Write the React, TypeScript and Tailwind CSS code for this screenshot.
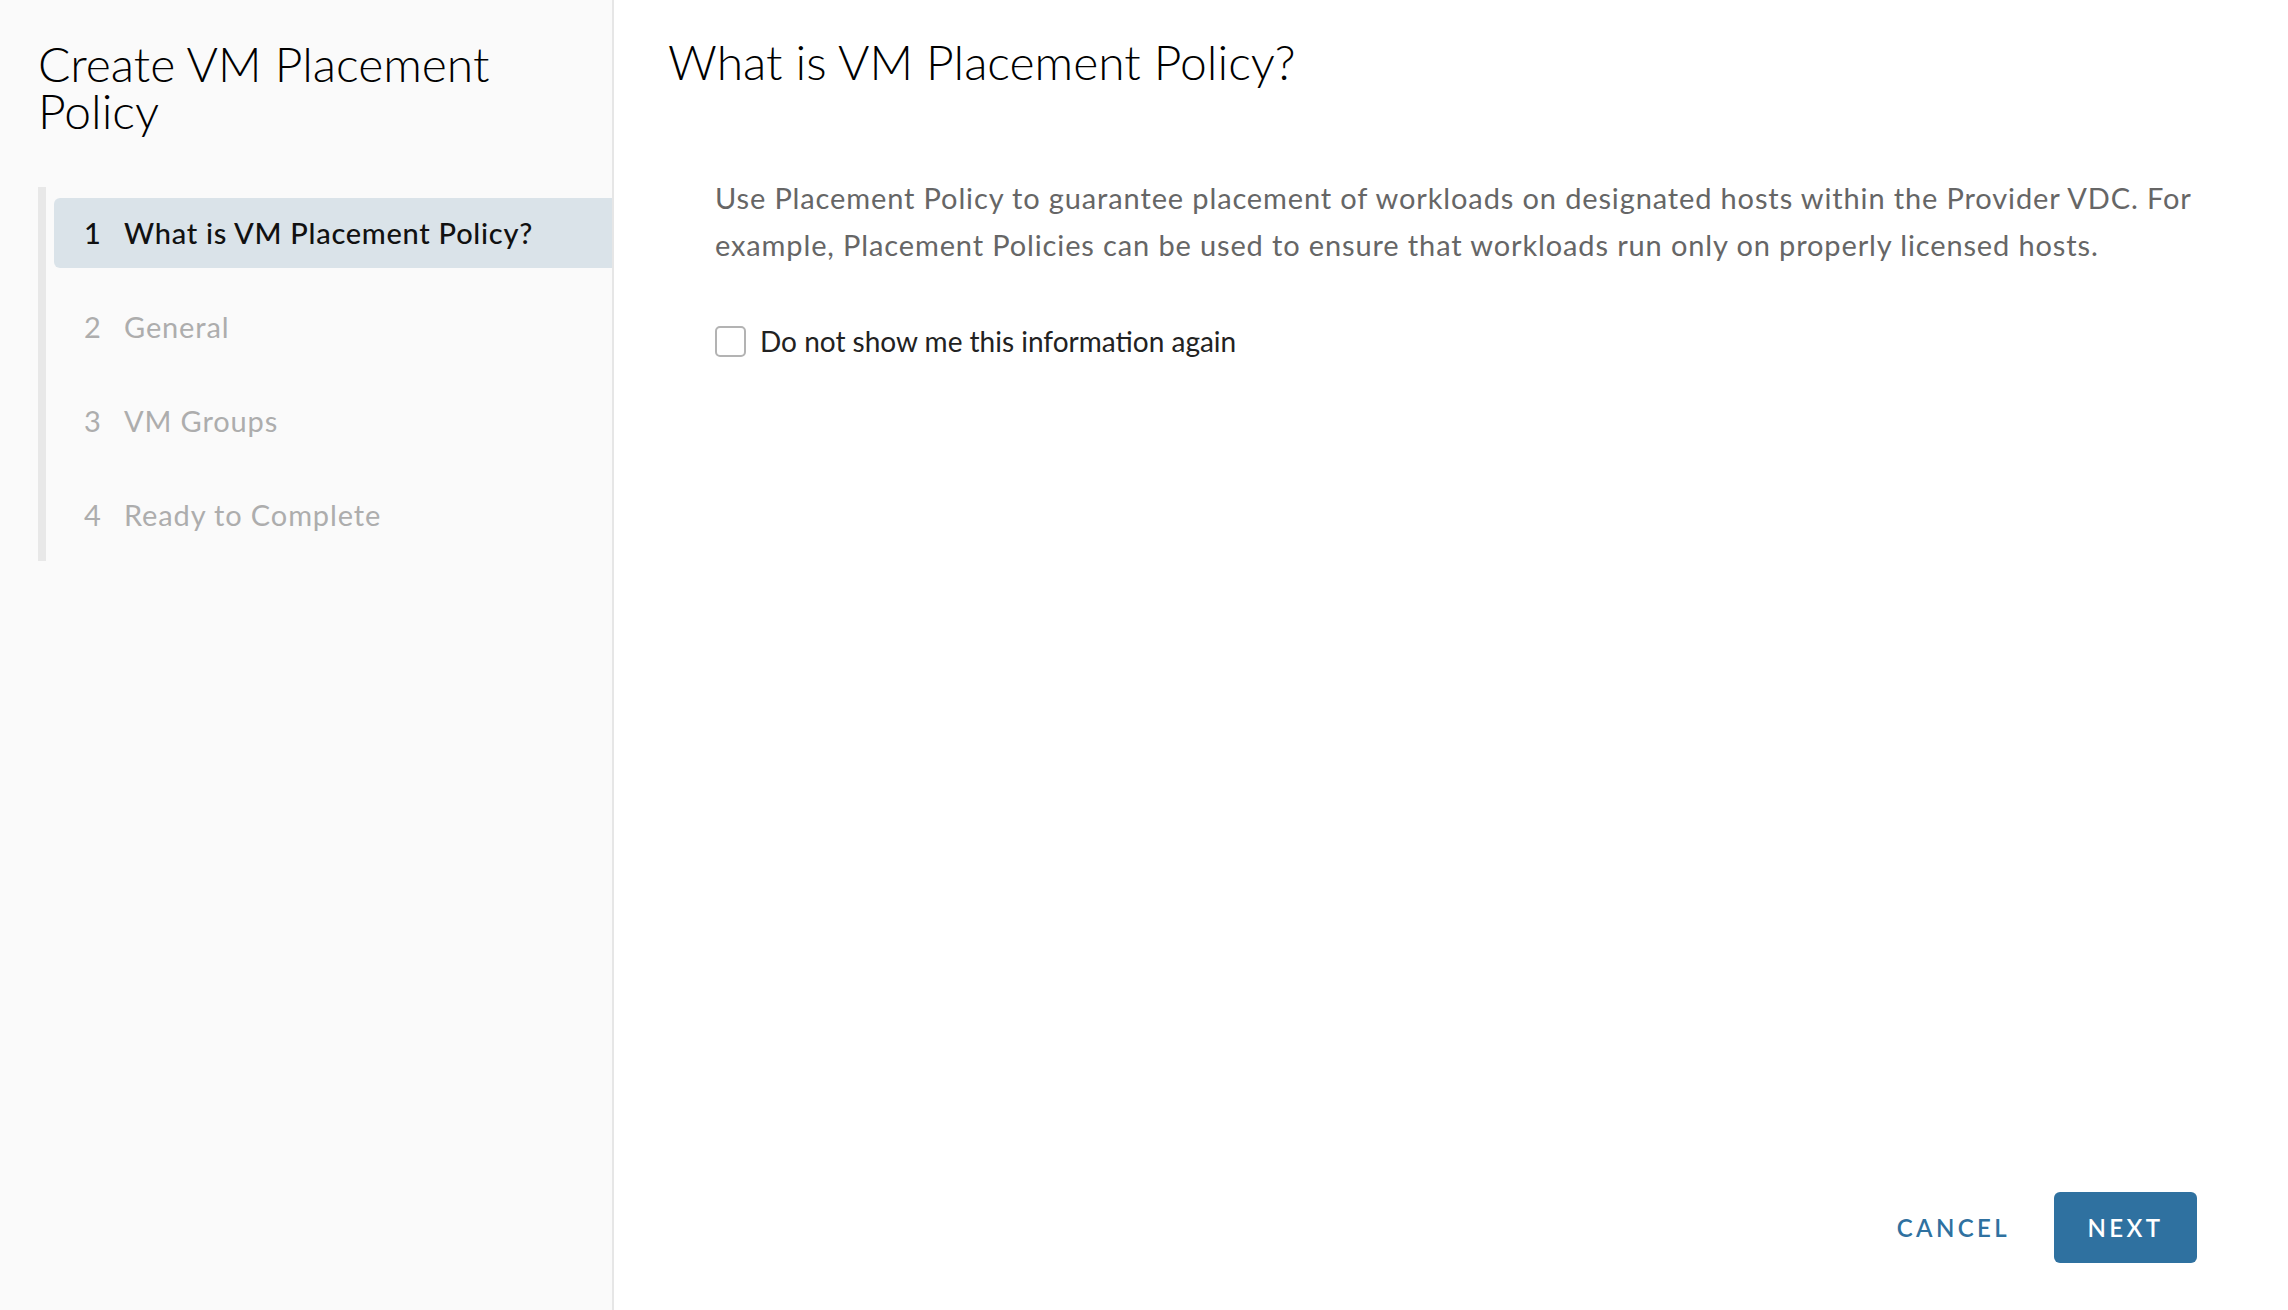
import React from "react";

const steps = [
  { n: 1, label: "What is VM Placement Policy?", active: true },
  { n: 2, label: "General", active: false },
  { n: 3, label: "VM Groups", active: false },
  { n: 4, label: "Ready to Complete", active: false },
];

export default function App() {
  return (
    <div
      className="flex h-[1310px] w-full bg-white text-black"
      style={{ fontFamily: "Lato, 'Open Sans', sans-serif" }}
    >
      {/* wizard nav */}
      <div className="flex w-[614px] shrink-0 flex-col border-r-2 border-[#e6e6e6] bg-[#fafafa]">
        <h1 className="px-[38px] pt-[40px] text-[48px] leading-[47px] font-light text-[#000]">
          Create VM Placement Policy
        </h1>
        <div className="mt-[53px] ml-[38px] flex flex-col gap-[24px] border-l-[8px] border-[#e8e8e8] py-[11px] pl-[8px]">
          {steps.map((s) => (
            <div
              key={s.n}
              className={
                s.active
                  ? "flex h-[70px] items-center rounded-l-[6px] bg-[#dae3e9] pl-[30px] text-[29px] tracking-[0.025em] font-medium text-[#111]"
                  : "flex h-[70px] items-center pl-[30px] text-[29px] tracking-[0.03em] text-[#adadad]"
              }
            >
              <span className="w-[40px]">{s.n}</span>
              <span>{s.label}</span>
            </div>
          ))}
        </div>
      </div>

      {/* content */}
      <div className="flex flex-1 flex-col pl-[54px] pr-[91px] pb-[47px]">
        <h2 className="pt-[32px] text-[48px] leading-[60px] font-light text-[#000]">
          What is VM Placement Policy?
        </h2>
        <div className="flex-1 pl-[47px] pt-[82px]">
          <p className="max-w-[1510px] text-[29px] leading-[47px] tracking-[0.03em] text-[#666]">
            Use Placement Policy to guarantee placement of workloads on designated hosts within the
            Provider VDC. For example, Placement Policies can be used to ensure that workloads run
            only on properly licensed hosts.
          </p>
          <label className="mt-[52px] flex items-center gap-[14px] text-[28px] text-[#222]">
            <span className="h-[31px] w-[31px] rounded-[5px] border-2 border-[#b3b3b3] bg-white" />
            <span>Do not show me this information again</span>
          </label>
        </div>
        <div className="flex items-center justify-end gap-[40px]">
          <button className="px-[4px] text-[24px] font-semibold tracking-[0.14em] text-[#2f71a0]">
            CANCEL
          </button>
          <button className="flex h-[71px] w-[143px] items-center justify-center rounded-[6px] bg-[#2f71a0] text-[24px] font-semibold tracking-[0.14em] text-white">
            NEXT
          </button>
        </div>
      </div>
    </div>
  );
}
